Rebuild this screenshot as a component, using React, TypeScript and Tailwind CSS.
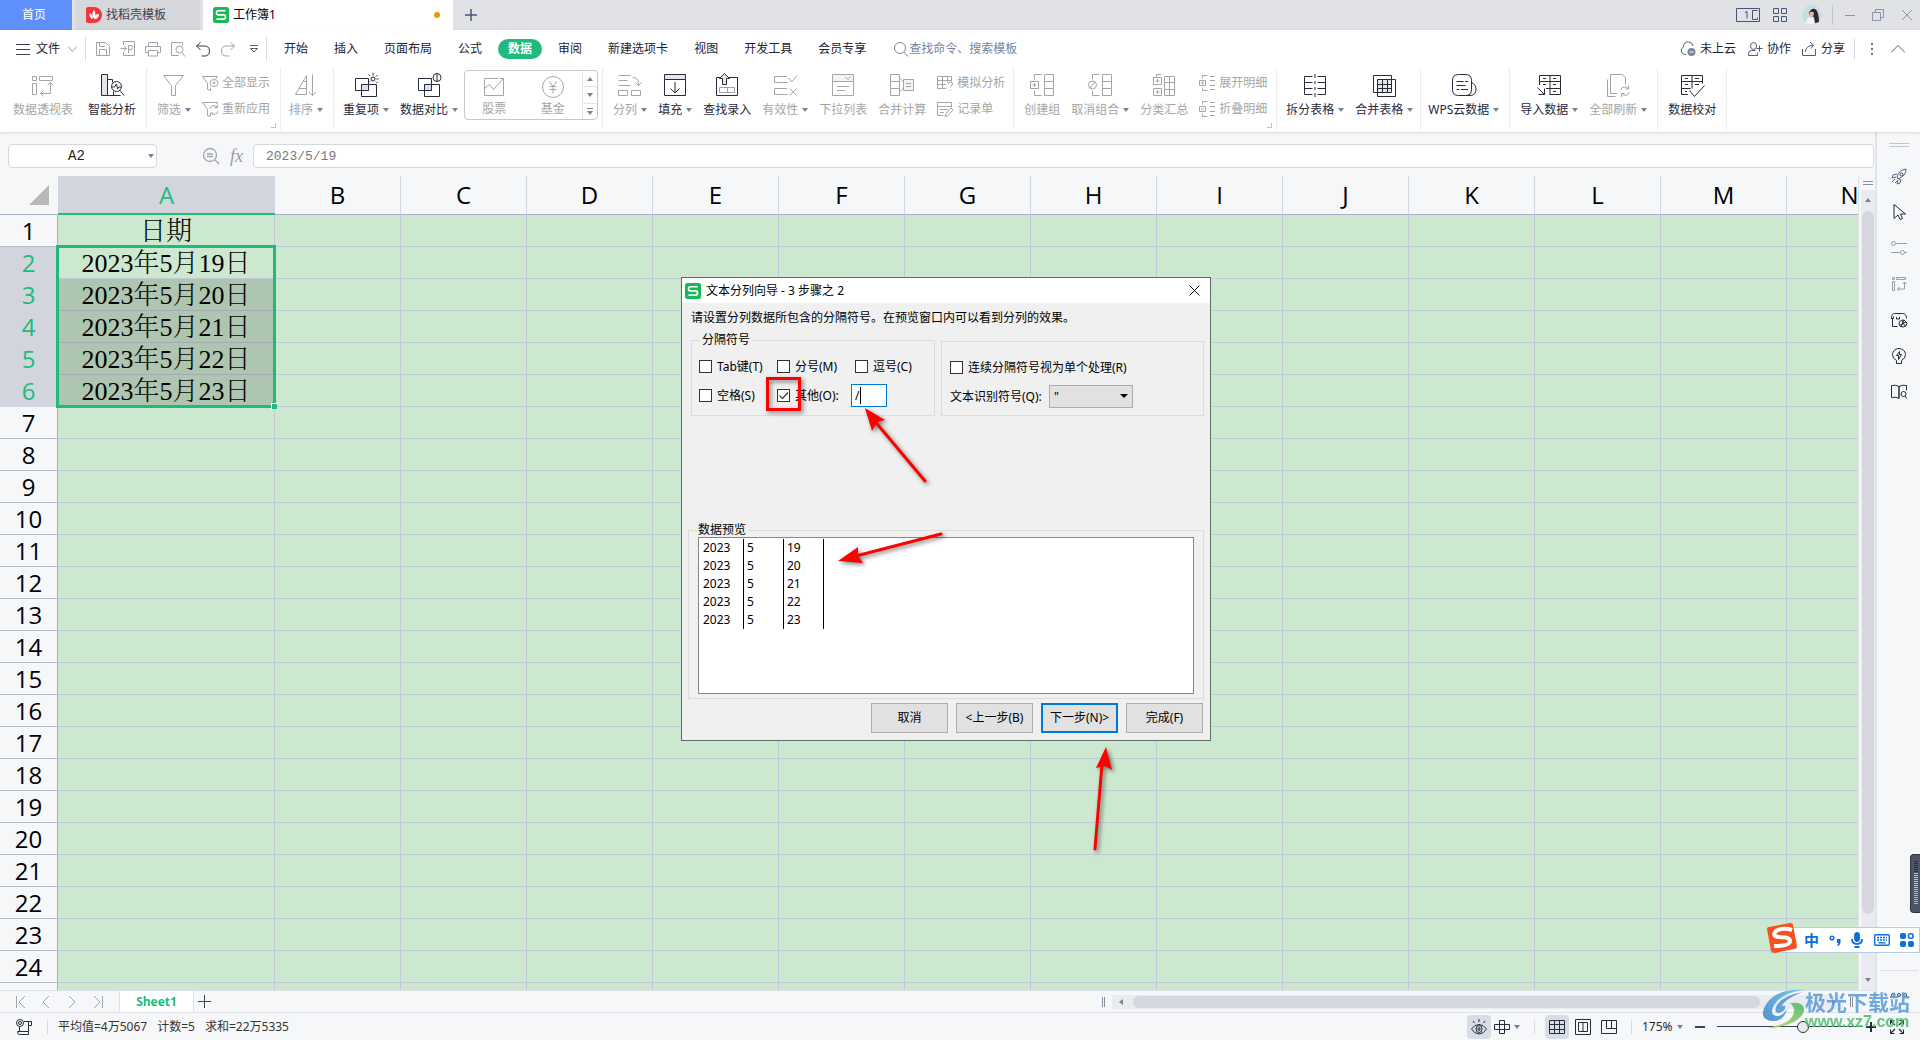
import React from "react";
import clsx from "clsx";

type IconName = keyof typeof glyphs;

// 24x24 line drawings used by the ribbon
const glyphs = {
  pivot: (
    <>
      <path d="M1.500 3.500h4v4h-4zM8.500 3.500h13v4h-13zM1.500 10.500h4v11h-4z" />
      <path d="M19.500 9.500v11h-10M16.500 12.500l3-3 3 3M12.500 17.500l-3 3 3 3" />
    </>
  ),
  analyze: (
    <>
      <path d="M1.500 1.500h6v21h-6z" fill="#e4e6ec" />
      <path d="M7.500 6.500h5v3M7.500 22.500h13M13.500 22.500v-4" />
      <circle cx="16.500" cy="13.500" r="5" />
      <path d="M11.500 14h3l2-3 1 5 1.500-2h2M20 17.500l4 5" />
    </>
  ),
  filter: <path d="M1.500 2.500h20l-8 10v10h-4v-10z" />,
  sort: <path d="M12.500 2.500v19h-11l11-19M9 8.500h3.500M5 15.500h7.500M18.500 1.500v21M15 19l3.500 3.500 3.500-3.500" />,
  duplicate: (
    <>
      <path d="M1.500 5.500h13v12h-13zM7.500 11.500h15v12h-15z" />
      <path d="M7.500 11.500h7v6h-7z" fill="#dcdfe6" />
      <circle cx="19" cy="6" r="2" />
      <path d="M19 0v2.500M14.500 1.500l1.500 1.500M22 8.500l1.500 1.500M15 9.500l1-1M22 3.500L23.500 2M22.500 6h2" />
    </>
  ),
  compare: (
    <>
      <path d="M1.500 5.500h13v12h-13zM7.500 11.500h15v12h-15z" />
      <path d="M7.500 11.500h7v6h-7z" fill="#dcdfe6" />
      <circle cx="20" cy="4.500" r="4" fill="#fff" />
      <path d="M20 .5v8" />
    </>
  ),
  stock: <path d="M16 4.500H2.500v17h19v-13M2.500 14.500l5-4 4 5 10-11M17.500 4.500h4v4" />,
  fund: (
    <>
      <circle cx="12" cy="13" r="10.500" />
      <path d="M8.500 7.500l3.500 5 3.500-5M12 12.500v7M8.500 12.500h7M8.500 15.500h7" />
    </>
  ),
  split: (
    <path d="M.5 2.500h12M.5 7.500h9M.5 12.500h12M.5 17.500h9v5h-9zM13.500 17.500h9v5h-9zM14.500 4.500q6 0 6 6v2M17.500 9.500l3 3 3-3" />
  ),
  fill: (
    <>
      <path d="M1.500 1.500h21v5h-21z" fill="#e4e6ec" />
      <path d="M1.500 6.500v16h21v-16M12 9v11M7.500 15.500l4.500 4.500 4.500-4.500" />
    </>
  ),
  lookup: (
    <>
      <path d="M6 4.500H1.500v18h21v-18H14" />
      <path d="M4.500 14.500h15v5h-15zM12.500 14.500v5" stroke="#9da1ad" />
      <path d="M7.500 11.500v-6h-3l5-5 5 5h-3v6z" fill="#e4e6ec" />
    </>
  ),
  validity: <path d="M14 3.500H1.500v6h13M14 15.500H1.500v6h13M15.500 5l3 4 5.500-6.500M17 15.500l6.500 7M23.500 15.500l-6.500 7" />,
  dropdown: (
    <>
      <path d="M1.500 1.500h21v7h-21z" fill="#f3f3f3" />
      <path d="M1.500 8.500v14h21v-14M14.500 4l2.500 2.500 2.500-2.500M6 13.500h12M6 17.500h8" />
    </>
  ),
  consolidate: (
    <>
      <path d="M.5 1.500h9v21h-9zM.5 8.500h9M.5 15.500h9" />
      <path d="M13.500 6.500h10v11h-10z" fill="#f3f3f3" />
      <path d="M9.500 5l4 4M9.500 19l4-4M16 10.500h5M16 13.500h5" />
    </>
  ),
  group: (
    <>
      <path d="M14.500 1.500h9v21h-9zM14.500 8.500h9M14.500 15.500h9M11.500 1.500h-7v5M11.500 22.500h-7v-5" />
      <path d="M.5 8.500h8v7h-8zM2.500 12h4M4.500 10v4" />
    </>
  ),
  ungroup: (
    <>
      <path d="M14.500 1.500h9v21h-9zM14.500 8.500h9M14.500 15.500h9M11.500 1.500h-7v5M11.500 22.500h-7v-5" />
      <circle cx="4.500" cy="12" r="4" />
      <path d="M2 15l5-6" />
    </>
  ),
  subtotal: (
    <path d="M12.500 3.500h10v19h-10zM17.500 3.500v19M12.500 9.500h10M12.500 16.500h10M9.500 1.500h-5v3M1.500 4.500h8v7h-8zM1.500 15.500h8v7h-8zM3.500 8h4M5.500 6v4M3.500 19h4M5.500 17v4" />
  ),
  splitTable: (
    <path d="M9.500 3.500h-8v18h8M1.500 9.500h8M1.500 15.500h8M14.500 3.500h8v18h-8M22.500 9.500h-8M22.500 15.500h-8M12 1v4M12 8v3M12 14v3M12 20v4" />
  ),
  mergeTable: (
    <>
      <path d="M19.500 6.500v-4h-18v17h4M5.500 6.500h18v17h-18z" />
      <path d="M5.500 6.500h14v13h-14z" fill="#e4e6ec" />
      <path d="M5.500 11.500h14M5.500 15.500h14M10.500 6.500v13M15.500 6.500v13" />
    </>
  ),
  cloud: (
    <>
      <path d="M6.500 1.500h7q6 0 6 6v9q0 6-6 6h-7q-6 0-6-6v-9q0-6 6-6z" />
      <path d="M4.500 8.500h7M13 8.500h3M4.500 12.500h9M4.500 16.500h3M9 16.500h7M19.500 9.500q4.500 2 4.500 6.500 0 6.500-6 6.500h-4" />
    </>
  ),
  importData: <path d="M2.500 12v-9.500h21v19h-11M13 2.500v19M2.500 8.500h21M9 15.500h14.500M6 5.500h3M16 5.500h3M6 11.500h3M16 11.500h3M16 18.500h3M.5 14.500l7 7M7.500 15.500v6h-6" />,
  refresh: (
    <>
      <path d="M11 20.500H4.500v-19h12l3 3v7M1.500 6.500v17h8" />
      <path d="M14.500 17a4.500 4.500 0 0 1 8-1M23.500 19a4.500 4.500 0 0 1-8 1.500M22.500 12.500v3.500h-3M15.500 24v-3.500h3" />
    </>
  ),
  verify: <path d="M8 21.500H1.500v-19h21v8M12 2.500v13M1.500 8.500h21M1.500 15.500h9M5 5.500h3M15 5.500h4M5 11.500h3M15 11.500h4M5 18.500h2M9.500 17.500l5 6 10-11" />,
};

// 16x16 drawings
const smallGlyphs = {
  showAll: <path d="M.5 1.500h15l-2 2.500M.5 1.500l5 7v6l3 1v-3M8 8a4 3.500 0 0 1 8 0 4 3.500 0 0 1-8 0M11 8a1 1 0 0 1 2 0 1 1 0 0 1-2 0" />,
  reapply: <path d="M.5 1.500h15l-1 1.500M.5 1.500l5 7v6l3 1M8 8a4 4 0 0 1 7-2M16 10a4 4 0 0 1-7 2M15.500 3.500v3h-3M8.500 15v-3h3" />,
  whatIf: <path d="M9 13.500H.5v-12h14v5M.5 5.500h14M.5 9.500h9M5.500 1.500v12M10.500 1.500v6M11.500 9q0-2 2-2t2 2q0 1-2 2.500v1M13.500 15v1" />,
  form: <path d="M6 14.500H.5v-13h14v5M.5 5.500h14M3 8.500h8M3 11.500h4M8 15.500l1-3 5-5.500 2 2-5 5.500z" />,
  expand: <path d="M.5 5.500h6v5h-6zM2 8h3M3.500 6.500v3M3.500 3.500v-3h5M3.500 12.500v3h5M11 1.500h5M11 5.500h5M11 10.500h5M11 14.500h5" />,
  collapse: <path d="M.5 5.500h6v5h-6zM2 8h3M3.500 3.500v-3h5M3.500 12.500v3h5M11 1.500h5M11 5.500h5M11 10.500h5M11 14.500h5" />,
  save: <path d="M1.500 1.500h9l4 4v9h-13zM4.500 1.500v4h5M4.500 14.500v-6h7v6" />,
  output: <path d="M3.500 4V.5h11v14h-11V11M.5 7.500h6M4 5l2.500 2.500L4 10M8.500 12V4.500h2.500q1.500 0 1.500 2t-1.500 2h-2.500" />,
  print: <path d="M3.500 5V1.500h9V5M3.500 11.500h-3v-6h15v6h-3M3.500 9.500h9v5.500h-9z" />,
  preview: <path d="M9 14.500H1.500v-13h11v3M6 8.500a3.500 3.500 0 1 1 7 0 3.500 3.500 0 1 1-7 0M12 11.500l3 4" />,
  undo: <path d="M5.500 1.500l-4 3.500 4 4M1.500 5h8q5 0 5 5t-5 5h-3" />,
  redo: <path d="M10.500 1.500l4 3.500-4 4M14.500 5h-8q-5 0-5 5t5 5h3" />,
  cloudOff: (
    <>
      <path d="M6 13.500H4.500a4 4 0 0 1-1-7.500q0-5 5-5 4 0 4.500 4" />
      <circle cx="11.500" cy="11" r="4" fill="#7d869f" stroke="none" />
      <path d="M9.500 11h4" stroke="#fff" />
    </>
  ),
  person: <path d="M3.500 5a3 3.500 0 1 1 6 0 3 3.500 0 1 1-6 0M1.500 14.500v-2q0-3 3-3h4M1.500 14.500h9v-3M12.500 4.500v6M9.500 7.500h6" />,
  share: <path d="M1.500 8v6.500h13V8M4.500 11q0-6 8-7M9 1l3.500 3L10 7.500" />,
  search: <path d="M1.500 7a5.500 5.500 0 1 1 11 0 5.500 5.500 0 1 1-11 0M11 11l4 4.500" />,
};

function Glyph({ name, className }: { name: IconName; className?: string }) {
  return (
    <svg viewBox="0 0 24 24" fill="none" stroke="currentColor" className={clsx("w-6 h-6 shrink-0 overflow-visible", className)}>
      {glyphs[name]}
    </svg>
  );
}

function SmallGlyph({ name, className }: { name: keyof typeof smallGlyphs; className?: string }) {
  return (
    <svg viewBox="0 0 16 16" fill="none" stroke="currentColor" className={clsx("w-4 h-4 shrink-0 overflow-visible", className)}>
      {smallGlyphs[name]}
    </svg>
  );
}

function Caret({ className }: { className?: string }) {
  return (
    <svg viewBox="0 0 6 4" className={clsx("w-1.5 h-1 shrink-0", className)} fill="#7a8194">
      <path d="M0 0h6L3 4z" />
    </svg>
  );
}

function WpsLogo() {
  return (
    <svg viewBox="0 0 16 16" className="w-4 h-4 shrink-0">
      <rect width="16" height="16" rx="2.500" fill="#19b955" />
      <path d="M12.500 3.700H5.500q-2 0-2 2.100t2 2.100h5q2 0 2 2.100t-2 2.100h-7" fill="none" stroke="#fff" strokeWidth="1.600" />
    </svg>
  );
}

interface ToolProps {
  icon: IconName;
  label: string;
  caret?: boolean;
  off?: boolean;
}

function Tool({ icon, label, caret, off }: ToolProps) {
  return (
    <button className={clsx("flex flex-col items-center gap-[5px] pt-[5px] shrink-0 whitespace-nowrap", off ? "text-[#a5a5a5]" : "text-[#262b3d]")}>
      <Glyph name={icon} />
      <span className="flex items-center leading-4">
        {label}
        {caret && <Caret className="ml-1" />}
      </span>
    </button>
  );
}

function ToolPair({ items }: { items: { icon: keyof typeof smallGlyphs; label: string }[] }) {
  return (
    <div className="flex flex-col gap-2.5 pt-[7px] shrink-0 text-[#a5a5a5]">
      {items.map((item) => (
        <button key={item.label} className="flex items-center gap-1 leading-4 whitespace-nowrap">
          <SmallGlyph name={item.icon} />
          {item.label}
        </button>
      ))}
    </div>
  );
}

function Group({ children, className = "gap-[11px] px-2.5", corner }: { children: React.ReactNode; className?: string; corner?: boolean }) {
  return (
    <div className={clsx("relative flex items-start border-r border-[#ececef] h-[62px] shrink-0", className)}>
      {children}
      {corner && <span className="absolute right-1 bottom-0.5 w-[5px] h-[5px] border-r border-b border-[#b9bfcc]" />}
    </div>
  );
}

function TitleBar() {
  return (
    <header className="flex h-[30px] bg-[#e1e2e6] text-[#3d4152]">
      <button className="w-[72px] pr-1 bg-[#5f8ffb] text-white">首页</button>
      <button className="flex items-center gap-1 w-[125px] ml-[3px] pl-[11px] bg-[#d6d7db]">
        <svg viewBox="0 0 16 16" className="w-4 h-4">
          <path d="M2 0h6a8 8 0 0 1 0 16H2a2 2 0 0 1-2-2V2a2 2 0 0 1 2-2z" fill="#f4333c" />
          <path d="M7 12Q2 10 4 6q3 2 3 6M7.500 11Q5 6 8 3q3 4-.5 8M8 12q0-5 5-5 0 5-5 5" fill="#fff" />
        </svg>
        找稻壳模板
      </button>
      <button className="flex items-center gap-1 w-[250px] ml-[3px] px-2.5 bg-white text-black">
        <WpsLogo />
        工作簿1
        <span className="w-1.5 h-1.5 rounded-full bg-[#e69a0c] ml-auto mr-[3px]" />
      </button>
      <button aria-label="新建" className="px-3">
        <svg viewBox="0 0 12 12" className="w-3 h-3" stroke="#4a5478" strokeWidth="1.500">
          <path d="M6 0v12M0 6h12" />
        </svg>
      </button>
      <div className="ml-auto flex items-center pr-[7px] text-[#4a5478]">
        <svg viewBox="0 0 24 14" className="w-6 h-3.5" fill="none" stroke="currentColor">
          <path d="M.5.5h23v13H.5zM16.500 2.500h5M16.500 2.500v9h5v-2M9 4.500l2-1v7" />
        </svg>
        <svg viewBox="0 0 14 14" className="w-3.5 h-3.5 ml-[13px]" fill="none" stroke="currentColor">
          <path d="M.5.5h5v5h-5zM8.500.5h5v5h-5zM.5 8.500h5v5h-5zM8.500 8.500h5v5h-5z" />
        </svg>
        <svg viewBox="0 0 20 20" className="w-5 h-5 ml-[15px]">
          <circle cx="10" cy="10" r="10" fill="#c9dce2" />
          <path d="M7 8q2-5 6-4 4 2 4 13l-4 1-1-6-4-1z" fill="#33252b" />
          <path d="M8 7q3-1 4 1l-1 4-4-1z" fill="#e6b9ac" />
          <path d="M4 18q1-6 5-6l3 2 0 5q-4 1-8-1z" fill="#eef4f7" />
        </svg>
        <span className="w-px h-5 bg-[#c3c6ce] ml-2.5" />
        <svg viewBox="0 0 68 12" className="w-[68px] h-3 ml-3" fill="none" stroke="#8b93aa">
          <path d="M0 6.500h10M27.500 3.500h8v8h-8zM30.500 3.500v-3h8v8h-3M57 1l10 10M67 1L57 11" />
        </svg>
      </div>
    </header>
  );
}

const tabs = ["开始", "插入", "页面布局", "公式", "数据", "审阅", "新建选项卡", "视图", "开发工具", "会员专享"];

function MenuBar() {
  return (
    <nav className="flex items-center h-[38px] pl-4 pr-[15px] text-[#1e2233] whitespace-nowrap">
      <button className="flex items-center">
        <svg viewBox="0 0 14 11" className="w-3.5 h-[11px] mr-1.5" stroke="#3b4052">
          <path d="M0 .5h14M0 5.500h14M0 10.500h14" />
        </svg>
        文件
        <svg viewBox="0 0 9 6" className="w-[9px] h-1.5 ml-2" fill="none" stroke="#9a9fac">
          <path d="M0 .5l4.500 5 4.500-5" />
        </svg>
      </button>
      <span className="w-px h-6 bg-[#dcdee4] ml-2 mr-[9px]" />
      <div className="flex items-center gap-[9px] text-[#a0a3ab]">
        <SmallGlyph name="save" />
        <SmallGlyph name="output" />
        <SmallGlyph name="print" />
        <SmallGlyph name="preview" />
        <SmallGlyph name="undo" className="text-[#333747]" />
        <SmallGlyph name="redo" />
        <svg viewBox="0 0 8 8" className="w-2 h-2 ml-[5px]" fill="none" stroke="#555a69">
          <path d="M0 .5h8M.5 3.500L4 7l3.500-3.500z" />
        </svg>
      </div>
      <span className="w-px h-6 bg-[#dcdee4] ml-2 mr-[7px]" />
      <div className="flex items-center gap-1.5">
        {tabs.map((tab) => (
          <button key={tab} className={clsx("h-5 px-2.5 rounded-full", tab === "数据" && "bg-[#20bb7c] text-white font-bold")}>
            {tab}
          </button>
        ))}
      </div>
      <label className="flex items-center ml-[17px] flex-1 text-[#7783a0]">
        <SmallGlyph name="search" />
        <input aria-label="搜索" placeholder="查找命令、搜索模板" className="w-40 outline-none placeholder:text-[#7783a0]" />
      </label>
      <div className="flex items-center">
        <button className="flex items-center gap-1">
          <SmallGlyph name="cloudOff" className="text-[#555c72]" />
          未上云
        </button>
        <button className="flex items-center gap-1 ml-[11px]">
          <SmallGlyph name="person" className="text-[#555c72]" />
          协作
        </button>
        <button className="flex items-center gap-1 ml-[10px]">
          <SmallGlyph name="share" className="text-[#555c72]" />
          分享
        </button>
        <span className="w-px h-5 bg-[#d4d7de] ml-[9px]" />
        <svg viewBox="0 0 2 12" className="w-0.5 h-3 ml-4" fill="#6d7386">
          <path d="M0 0h2v2H0zM0 5h2v2H0zM0 10h2v2H0z" />
        </svg>
        <svg viewBox="0 0 14 8" className="w-3.5 h-2 ml-[18px]" fill="none" stroke="#555c72">
          <path d="M0 7.500l7-7 7 7" />
        </svg>
      </div>
    </nav>
  );
}

function Ribbon() {
  return (
    <div className="flex h-16 overflow-hidden">
      <Group className="gap-[15px] pl-[13px] pr-2.5">
        <Tool icon="pivot" label="数据透视表" off />
        <Tool icon="analyze" label="智能分析" />
      </Group>
      <Group corner>
        <Tool icon="filter" label="筛选" caret off />
        <ToolPair items={[{ icon: "showAll", label: "全部显示" }, { icon: "reapply", label: "重新应用" }]} />
      </Group>
      <Group className="pl-2 pr-2.5">
        <Tool icon="sort" label="排序" caret off />
      </Group>
      <Group className="gap-[11px] pl-[9px] pr-1">
        <Tool icon="duplicate" label="重复项" caret />
        <Tool icon="compare" label="数据对比" caret />
        <div className="flex -ml-[5px] mt-0.5 h-[50px] w-[134px] border border-[#c6c8ce] rounded-sm text-[#a5a5a5]">
          <div className="flex flex-1 justify-around">
            <button className="flex flex-col items-center gap-[3px] pt-[3px] leading-4">
              <Glyph name="stock" />
              股票
            </button>
            <button className="flex flex-col items-center gap-[3px] pt-[3px] leading-4">
              <Glyph name="fund" />
              基金
            </button>
          </div>
          <div className="flex flex-col w-[15px] border-l border-[#e2e4e8]">
            <button aria-label="上一行" className="flex-1 flex items-center justify-center border-b border-[#e2e4e8]">
              <Caret className="rotate-180" />
            </button>
            <button aria-label="下一行" className="flex-1 flex items-center justify-center border-b border-[#e2e4e8]">
              <Caret />
            </button>
            <button aria-label="更多" className="flex-1 flex flex-col gap-0.5 items-center justify-center">
              <span className="w-1.5 h-px bg-[#7a8194]" />
              <Caret />
            </button>
          </div>
        </div>
      </Group>
      <Group className="gap-[11px] pl-2.5 pr-2">
        <Tool icon="split" label="分列" caret off />
        <Tool icon="fill" label="填充" caret />
        <Tool icon="lookup" label="查找录入" />
        <Tool icon="validity" label="有效性" caret off />
        <Tool icon="dropdown" label="下拉列表" off />
        <Tool icon="consolidate" label="合并计算" off />
        <ToolPair items={[{ icon: "whatIf", label: "模拟分析" }, { icon: "form", label: "记录单" }]} />
      </Group>
      <Group corner className="gap-[11px] pl-2.5 pr-[9px]">
        <Tool icon="group" label="创建组" off />
        <Tool icon="ungroup" label="取消组合" caret off />
        <Tool icon="subtotal" label="分类汇总" off />
        <ToolPair items={[{ icon: "expand", label: "展开明细" }, { icon: "collapse", label: "折叠明细" }]} />
      </Group>
      <Group className="gap-[11px] pl-[9px] pr-[7px]">
        <Tool icon="splitTable" label="拆分表格" caret />
        <Tool icon="mergeTable" label="合并表格" caret />
      </Group>
      <Group className="pl-[7px] pr-2.5">
        <Tool icon="cloud" label="WPS云数据" caret />
      </Group>
      <Group>
        <Tool icon="importData" label="导入数据" caret />
        <Tool icon="refresh" label="全部刷新" caret off />
      </Group>
      <Group>
        <Tool icon="verify" label="数据校对" />
      </Group>
    </div>
  );
}

function FormulaBar() {
  return (
    <div className="flex items-center h-11 pt-1 pl-2 pr-px">
      <div className="relative">
        <input aria-label="名称框" defaultValue="A2" className="w-[149px] h-6 pr-3 bg-white border border-[#d5d7dd] rounded-sm text-center text-sm text-[#222] font-['Liberation_Mono',monospace]" />
        <Caret className="absolute right-[3px] top-2.5" />
      </div>
      <svg viewBox="0 0 18 18" className="w-[18px] h-[18px] ml-[45px]" fill="none" stroke="#a3a6ae" strokeWidth="1.300">
        <circle cx="8" cy="8" r="6.500" />
        <path d="M5 7h6M5 9.500h6M13 13l4 4" />
      </svg>
      <span className="w-[33px] text-center text-lg leading-6 italic text-[#9a9da6] font-['Liberation_Serif',serif]">fx</span>
      <input aria-label="编辑栏" defaultValue="2023/5/19" className="flex-1 h-6 px-3 bg-white border border-[#d5d7dd] rounded-sm text-[13px] text-[#777] font-['Liberation_Mono',monospace]" />
    </div>
  );
}

const columns = ["A", "B", "C", "D", "E", "F", "G", "H", "I", "J", "K", "L", "M", "N"];
const lastLabelledRow = 24;
const columnA: Record<number, string> = {
  1: "日期",
  2: "2023年5月19日",
  3: "2023年5月20日",
  4: "2023年5月21日",
  5: "2023年5月22日",
  6: "2023年5月23日",
};

function Sheet() {
  const rows = Array.from({ length: lastLabelledRow + 1 }, (_, i) => i + 1);

  return (
    <div className="flex-1 min-w-0 overflow-hidden bg-[#cce8cf]">
      <table className="border-separate border-spacing-0 font-['Open_Sans','Noto_Sans',sans-serif] text-2xl text-black">
        <thead>
          <tr className="h-[39px]">
            <th className="w-[58px] min-w-[58px] p-0 bg-[#f6f7f9] border-b border-r border-b-[#a9afc6] border-r-[#f6f7f9]">
              <svg viewBox="0 0 20 20" className="w-5 h-5 ml-auto mr-2" fill="#b9b9b9">
                <path d="M20 0v20H0z" />
              </svg>
            </th>
            {columns.map((col) => (
              <th
                key={col}
                className={clsx(
                  "p-0 font-normal leading-8",
                  col === "A"
                    ? "w-[217px] min-w-[217px] bg-[#d2d5dd] text-[#20bb7c] border-b-2 border-[#20bb7c]"
                    : "w-[126px] min-w-[126px] bg-[#f6f7f9] border-b border-r border-b-[#a9afc6] border-r-[#d3d6e0]"
                )}
              >
                {col}
              </th>
            ))}
          </tr>
        </thead>
        <tbody>
          {rows.map((row) => {
            const selected = row > 1 && row < 7;
            return (
              <tr key={row} className="h-8">
                <th
                  className={clsx(
                    "p-0 font-normal leading-[31px] border-b border-r border-r-[#a9afc6]",
                    selected ? "bg-[#d2d5de] text-[#20bb7c] border-b-[#d2d8e4]" : "bg-[#f6f7f9] border-b-[#b4b9cc]"
                  )}
                >
                  {row <= lastLabelledRow && row}
                </th>
                {columns.map((col) => {
                  const inRange = col === "A" && selected;
                  return (
                    <td
                      key={col}
                      className={clsx(
                        "relative p-0 border-b border-r text-center whitespace-nowrap",
                        inRange && row > 2 ? "bg-[#aec5b0] border-[#a3a9bd]" : "border-[#c4c8dc]",
                        col === "A" && "pt-0.5 leading-[29px] text-[26px] font-light font-['Liberation_Serif','Noto_Serif_CJK_SC','Noto_Sans_CJK_SC',serif]"
                      )}
                    >
                      {col === "A" && columnA[row]}
                      {col === "A" && row === 2 && (
                        <div className="absolute z-10 -left-0.5 -right-0.5 -top-0.5 h-[163px] border-[3px] border-[#20bb7c]">
                          <span className="absolute -right-1 -bottom-1 w-1.5 h-1.5 bg-[#20bb7c] border-t border-l border-white" />
                        </div>
                      )}
                    </td>
                  );
                })}
              </tr>
            );
          })}
        </tbody>
      </table>
    </div>
  );
}

function VerticalScroll() {
  return (
    <div className="flex flex-col items-center w-[17px] shrink-0 pl-0.5 border-l border-[#dfe1e7]">
      <svg viewBox="0 0 10 4" className="w-2.5 h-1 mt-[5px] mb-[5px] shrink-0" stroke="#8790a8">
        <path d="M0 .5h10M0 3.500h10" />
      </svg>
      <div className="flex flex-col items-center flex-1 w-full bg-[#e9ebf0]">
        <Caret className="rotate-180 mt-2 mb-[9px]" />
        <div className="flex-1 w-3 rounded-full bg-[#d4d7de]" />
        <Caret className="mt-16 mb-2" />
      </div>
    </div>
  );
}

function SheetBar() {
  return (
    <div className="flex items-center h-[22px] border-t border-[#dfe1e7] text-[#3d4152]">
      <svg viewBox="0 0 88 12" className="w-[88px] h-3 ml-4" fill="none" stroke="#a0a4af">
        <path d="M.5 0v12M9 0L3 6l6 6M33 0l-6 6 6 6M53 0l6 6-6 6M78 0l6 6-6 6M86.500 0v12" />
      </svg>
      <button className="self-stretch w-[75px] ml-[15px] bg-white border-x border-[#dfe1e7] text-[#20bb7c] font-bold font-['Open_Sans','Noto_Sans',sans-serif]">Sheet1</button>
      <button aria-label="新建工作表" className="ml-1">
        <svg viewBox="0 0 13 13" className="w-[13px] h-[13px]" stroke="currentColor">
          <path d="M6.500 0v13M0 6.500h13" />
        </svg>
      </button>
      <div className="flex flex-1 justify-end items-center">
        <span className="w-[3px] h-2.5 border-x border-[#8790a8] mr-[7px]" />
        <div className="flex items-center w-[731px] h-3.5 bg-[#e9ebf0] px-1.5">
          <Caret className="rotate-90" />
          <div className="flex-1 h-3 rounded-full bg-[#d4d7de] ml-[9px] mr-[71px]" />
          <Caret className="-rotate-90" />
        </div>
        <span className="w-[3px] h-2.5 border-x border-[#8790a8] ml-[7px] mr-[22px]" />
      </div>
    </div>
  );
}

const sideIcons = [
  { name: "rocket", tone: "text-[#5a6480]", d: "M6 9Q8 2 15 1q0 7-8 10zM6 9l3 3M9 7a1.500 1.500 0 1 0 3-1 1.500 1.500 0 1 0-3 1M6 6L2 7l-1 3 4-1M10 11l-1 4-3 1 1-4M4 11l-3 3M6 13l-2 2" },
  { name: "cursor", tone: "text-[#262b3d]", d: "M3 .5v14l4-3.500 2 4.500 2.500-1-2-4.500h5z" },
  { name: "settings", tone: "text-[#959dae]", d: "M.5 3.500a2 2 0 1 0 4 0 2 2 0 1 0-4 0M5 3.500h11M0 12.500h9M9.500 12.500a2 2 0 1 0 4 0 2 2 0 1 0-4 0M14 12.500h2" },
  { name: "transpose", tone: "text-[#959dae]", d: "M1.500 1.500h2v2h-2zM5.500 1.500h9v2h-9zM1.500 5.500h2v9h-2zM13.500 6v7h-7M11.500 8l2-2 2 2M8.500 11l-2 2 2 2" },
  { name: "style", tone: "text-[#262b3d]", d: "M1.500 7v7.500h5M.5 6.500q0-5 3-5h8q4 0 4 5M.5 6.500h2v-2M5.500 5v2h3v-2M8 12q0-4 5-4l3 3q0 4-4 4t-4-3M9 13l6-3M11 9l3 5M13 8l-3 7" },
  { name: "idea", tone: "text-[#262b3d]", d: "M5.500 12.500q-4-2-4-6a6.500 6 0 0 1 13 0q0 4-4 6v3h-5zM8.500 3.500l-3 4h2v4l3-5h-2z" },
  { name: "book", tone: "text-[#262b3d]", d: "M8 2.500Q5 .5.5 1.500v12q5-1 7.500 1zV14M8 2.500q3-2 7.500-1v5M10 10a2.500 2.500 0 1 0 5 0 2.500 2.500 0 1 0-5 0M14 12l2 2.500" },
];

function Sidebar() {
  return (
    <aside className="flex flex-col items-center w-[45px] shrink-0 border-l-2 border-[#e1e3ea] pt-[11px] pb-[15px]">
      <span className="w-5 h-1 border-y border-[#c3c6ce] mb-[21px]" />
      <div className="flex flex-col gap-5">
        {sideIcons.map((icon) => (
          <button key={icon.name} aria-label={icon.name} className={icon.tone}>
            <svg viewBox="0 0 16 16" className="w-4 h-4 overflow-visible" fill="none" stroke="currentColor">
              <path d={icon.d} />
            </svg>
          </button>
        ))}
      </div>
      <span className="w-[38px] h-px bg-[#dfe1e7] mt-auto" />
      <svg viewBox="0 0 16 4" className="w-4 h-1 mt-[22px]" fill="none" stroke="#3b4052">
        <circle cx="2" cy="2" r="1.500" />
        <circle cx="8" cy="2" r="1.500" />
        <circle cx="14" cy="2" r="1.500" />
      </svg>
    </aside>
  );
}

function StatusBar() {
  return (
    <footer className="flex items-center h-7 border-t border-[#dfe1e7] text-[#262b3d] pl-4 pr-4">
      <svg viewBox="0 0 16 16" className="w-4 h-4" fill="none" stroke="currentColor">
        <circle cx="4" cy="4" r="3.500" />
        <circle cx="4" cy="4" r="1.500" />
        <path d="M8 2.500h7.500v4h-2.500M12.500 2.500v10M3.500 8v4M1.500 12.500h11v3h-9q-2 0-2-3z" />
      </svg>
      <span className="w-px h-3.5 bg-[#d9dbe1] ml-[15px] mr-2.5" />
      <div className="flex gap-2.5 text-[#333]">
        <span>平均值=4万5067</span>
        <span>计数=5</span>
        <span>求和=22万5335</span>
      </div>
      <div className="ml-auto flex items-center">
        <button aria-label="护眼模式" className="flex items-center justify-center w-6 h-6 rounded-sm bg-[#d8dde5]">
          <svg viewBox="0 0 16 16" className="w-4 h-4" fill="none" stroke="currentColor">
            <path d="M.5 10q3-4.500 7.500-4.500T15.500 10q-3 5-7.500 5T.5 10M8 0v3M2 2l1.500 2M14 2l-1.500 2" />
            <ellipse cx="8" cy="10" rx="3" ry="3.500" />
            <ellipse cx="8" cy="10" rx="1" ry="1.500" />
          </svg>
        </button>
        <button aria-label="阅读模式" className="flex items-center gap-1 ml-[3px]">
          <svg viewBox="0 0 16 16" className="w-4 h-4" fill="none" stroke="currentColor">
            <path d="M5.500 1.500h5v13h-5zM.5 5.500h15v5H.5z" />
          </svg>
          <Caret />
        </button>
        <span className="w-px h-3.5 bg-[#d9dbe1] ml-3.5 mr-2.5" />
        <button aria-label="普通视图" className="flex items-center justify-center w-6 h-6 rounded-sm bg-[#d8dde5]">
          <svg viewBox="0 0 16 14" className="w-4 h-3.5" fill="none" stroke="currentColor">
            <path d="M.5.5h15v13H.5zM.5 4.500h15M.5 9.500h15M5.500.5v13M10.500.5v13" />
          </svg>
        </button>
        <button aria-label="分页预览" className="ml-1.5">
          <svg viewBox="0 0 16 16" className="w-4 h-4" fill="none" stroke="currentColor">
            <path d="M.5.5h15v15H.5zM3.500 3.500h9v9h-9zM8 3.500v9" />
          </svg>
        </button>
        <button aria-label="页面布局" className="ml-2.5">
          <svg viewBox="0 0 16 14" className="w-4 h-3.5" fill="none" stroke="currentColor">
            <path d="M.5.5h15v13H.5zM5.500.5v8h10M10.500.5v8" />
          </svg>
        </button>
        <span className="w-px h-3.5 bg-[#d9dbe1] ml-3.5 mr-2.5" />
        <button className="flex items-center gap-1 w-[43px]">
          175%
          <Caret />
        </button>
        <button aria-label="缩小" className="ml-2.5 w-2.5 h-0.5 bg-[#3b435e]" />
        <input
          type="range"
          aria-label="缩放"
          defaultValue={60}
          className="appearance-none w-[146px] h-3 ml-3 bg-[linear-gradient(#3b435e,#3b435e)] bg-[length:100%_1px] bg-center bg-no-repeat [&::-webkit-slider-thumb]:appearance-none [&::-webkit-slider-thumb]:w-3 [&::-webkit-slider-thumb]:h-3 [&::-webkit-slider-thumb]:rounded-full [&::-webkit-slider-thumb]:bg-[#e9e9ea] [&::-webkit-slider-thumb]:border [&::-webkit-slider-thumb]:border-[#333]"
        />
        <button aria-label="放大" className="ml-[3px]">
          <svg viewBox="0 0 10 10" className="w-2.5 h-2.5" stroke="#262b3d" strokeWidth="2">
            <path d="M5 0v10M0 5h10" />
          </svg>
        </button>
        <button aria-label="全屏" className="ml-3.5">
          <svg viewBox="0 0 14 14" className="w-3.5 h-3.5" fill="none" stroke="currentColor" strokeWidth="1.200">
            <path d="M.5 4.500v-4h4M9.500.5h4v4M13.500 9.500v4h-4M4.500 13.500h-4v-4M1 1l4 4M13 1L9 5M13 13L9 9M1 13l4-4" />
          </svg>
        </button>
      </div>
    </footer>
  );
}

function Check({ label, checked, className }: { label: string; checked?: boolean; className?: string }) {
  return (
    <label className={clsx("flex items-center gap-[5px] whitespace-nowrap", className)}>
      <span className="relative w-[13px] h-[13px] shrink-0">
        <input type="checkbox" defaultChecked={checked} className="peer appearance-none block w-full h-full border border-[#333] bg-white" />
        <svg viewBox="0 0 13 13" className="hidden peer-checked:block absolute inset-0 pointer-events-none" fill="none" stroke="#444" strokeWidth="1.400">
          <path d="M2.500 6.500l3 3 5.500-6" />
        </svg>
      </span>
      {label}
    </label>
  );
}

const dialogButton = "w-[77px] h-[30px] bg-[#e1e1e1] whitespace-nowrap";
const previewDays = [19, 20, 21, 22, 23];

function SplitDialog() {
  return (
    <section role="dialog" aria-label="文本分列向导" className="absolute left-[681px] top-[277px] w-[530px] bg-[#f0f0f0] border border-[#5f6b66] text-black">
      <div className="flex items-center gap-[5px] h-[25px] pl-[3px] pr-2.5 bg-white">
        <WpsLogo />
        文本分列向导 - 3 步骤之 2
        <button aria-label="关闭" className="ml-auto">
          <svg viewBox="0 0 11 11" className="w-[11px] h-[11px]" stroke="#111">
            <path d="M.5.5l10 10M10.500.5l-10 10" />
          </svg>
        </button>
      </div>

      <p className="pt-[7px] pl-[9px] leading-4">请设置分列数据所包含的分隔符号。在预览窗口内可以看到分列的效果。</p>

      <div className="flex items-end gap-1.5 mt-[5px] pl-[9px] pr-1.5">
        <fieldset className="w-[244px] h-[85px] border border-[#dcdcdc] pl-[7px]">
          <legend className="ml-px px-0.5 leading-[18px]">分隔符号</legend>
          <div className="flex h-[29px] mt-[3px]">
            <Check label="Tab键(T)" className="w-[78px]" />
            <Check label="分号(M)" className="w-[78px]" />
            <Check label="逗号(C)" />
          </div>
          <div className="flex items-center h-[29px]">
            <Check label="空格(S)" className="w-[78px]" />
            <Check label="其他(O):" checked className="w-[74px]" />
            <span className="relative">
              <input aria-label="其他分隔符" defaultValue="/" className="block w-9 h-[23px] px-[3px] bg-white border border-[#0078d7]" />
              <span className="absolute left-[9px] top-[3px] w-px h-[17px] bg-black" />
            </span>
          </div>
        </fieldset>
        <fieldset className="flex-1 h-[75px] border border-[#dcdcdc] pl-2 pt-[11px]">
          <Check label="连续分隔符号视为单个处理(R)" className="h-[29px]" />
          <div className="flex items-center h-[29px]">
            <label htmlFor="qualifier" className="w-[99px] whitespace-nowrap">文本识别符号(Q):</label>
            <div className="relative">
              <select id="qualifier" className="appearance-none block w-[84px] h-[23px] px-1 bg-[#e1e1e1] border border-[#adadad]">
                <option>"</option>
              </select>
              <svg viewBox="0 0 8 4" className="absolute right-[5px] top-[9px] w-2 h-1 pointer-events-none">
                <path d="M0 0h8L4 4z" />
              </svg>
            </div>
          </div>
        </fieldset>
      </div>

      <fieldset className="mt-[107px] ml-1.5 mr-1.5 border border-[#dcdcdc] px-[9px] pb-1">
        <legend className="leading-[14px] pr-0.5">数据预览</legend>
        <div className="h-[157px] border border-[#828790] bg-white pt-px">
          <table className="border-separate border-spacing-0 leading-[18px]">
            <tbody>
              {previewDays.map((day) => (
                <tr key={day}>
                  <td className="w-[45px] p-0 pl-1 border-r border-black">2023</td>
                  <td className="w-10 p-0 pl-[3px] border-r border-black">5</td>
                  <td className="w-10 p-0 pl-[3px] border-r border-black">{day}</td>
                </tr>
              ))}
            </tbody>
          </table>
        </div>
      </fieldset>

      <div className="flex justify-end gap-2 mt-1 pr-[7px] pb-[7px]">
        <button className={clsx(dialogButton, "border border-[#adadad]")}>取消</button>
        <button className={clsx(dialogButton, "border border-[#adadad]")}>&lt;上一步(B)</button>
        <button className={clsx(dialogButton, "border-2 border-[#0078d7]")}>下一步(N)&gt;</button>
        <button className={clsx(dialogButton, "border border-[#adadad]")}>完成(F)</button>
      </div>
    </section>
  );
}

function Annotations() {
  return (
    <svg viewBox="0 0 480 500" className="absolute left-[760px] top-[370px] w-[480px] h-[500px] pointer-events-none drop-shadow-[2px_2px_2px_rgba(0,0,0,0.5)]" fill="#f00" stroke="#f00">
      <path d="M7.500 8.500h32v31h-32z" fill="none" strokeWidth="3" />
      <path d="M113 49l52 62M96 186l85-22M342 394l-7 85" fill="none" strokeWidth="3" strokeLinecap="round" />
      <path d="M105 38l20 12-8 2-5 9zM78 191l20-14 0 9 5 7zM346 377l6 23-7-4-9 2z" stroke="none" />
    </svg>
  );
}

function ImeBar() {
  return (
    <div className="absolute right-0 top-[927px] flex items-center w-[150px] h-[26px] pl-[33px] pr-[5px] bg-white border border-[#b7cbe8] text-[#0a6fd8]">
      <svg viewBox="0 0 32 32" className="absolute -left-[5px] -top-[5px] w-8 h-8">
        <path d="M1 6Q1 4 3 4L24 0q3 0 3 2l4 21q0 3-3 3L9 30q-3 0-4-2z" fill="#f4511e" />
        <path d="M26 7Q17 4 10 8q-5 5 3 6 11 0 11 4 0 5-16 5" fill="none" stroke="#fff" strokeWidth="4" />
      </svg>
      <div className="flex flex-1 items-center justify-between">
        <span className="text-[15px] leading-4 font-bold">中</span>
        <svg viewBox="0 0 12 12" className="w-3 h-3" fill="currentColor">
          <circle cx="3" cy="4" r="1.800" fill="none" stroke="currentColor" strokeWidth="1.500" />
          <path d="M8 5h3.500v3q0 3-3 4v-1.500l1-1.500H8z" />
        </svg>
        <svg viewBox="0 0 12 16" className="w-3 h-4" fill="none" stroke="currentColor" strokeWidth="1.800">
          <rect x="4" y="1" width="4" height="8" rx="2" fill="currentColor" />
          <path d="M1 7q0 5 5 5t5-5M6 12v1M3.500 15h5" />
        </svg>
        <svg viewBox="0 0 16 12" className="w-4 h-3" fill="none" stroke="currentColor" strokeWidth="1.400">
          <rect x=".7" y=".7" width="14.600" height="10.600" rx="1" />
          <path d="M3 3.500h10M3 6h10" strokeDasharray="2 1" />
          <path d="M4.500 8.800h7" />
        </svg>
        <svg viewBox="0 0 14 14" className="w-3.5 h-3.5" fill="currentColor">
          <rect width="6" height="6" rx="2" />
          <rect x="8.500" y=".8" width="4.500" height="4.500" rx="1.500" fill="none" stroke="currentColor" strokeWidth="1.600" />
          <rect y="8" width="6" height="6" rx="2" />
          <rect x="8" y="8" width="6" height="6" rx="2" />
        </svg>
      </div>
    </div>
  );
}

const levels = Array.from({ length: 22 }, (_, i) => i);

function LevelMeter() {
  return (
    <div className="absolute right-0 top-[854px] w-2.5 h-[59px] rounded-l bg-[#4e5566] border border-r-0 border-[#2f3442]">
      <svg viewBox="0 0 4 46" className="absolute left-[3px] top-1.5 w-1 h-[46px]">
        {levels.map((i) => (
          <rect key={i} y={i * 2} width="4" height="1" fill={i < 6 ? "#2b2f3a" : i < 9 ? "#e8c154" : i < 15 ? "#bfd96c" : "#6fd9a8"} />
        ))}
      </svg>
    </div>
  );
}

function SiteMark() {
  return (
    <div className="absolute right-[10px] bottom-[9px] flex items-center pointer-events-none opacity-85">
      <svg viewBox="0 0 44 42" className="w-11 h-[42px]">
        <defs>
          <linearGradient id="swirlBlue" x1="0" y1="1" x2="1" y2="0">
            <stop offset="0" stopColor="#3a7fc6" />
            <stop offset="1" stopColor="#5fc4ef" />
          </linearGradient>
          <linearGradient id="swirlGreen" x1="0" y1="1" x2="1" y2="0">
            <stop offset="0" stopColor="#c9d64b" />
            <stop offset="1" stopColor="#3fb56c" />
          </linearGradient>
        </defs>
        <path d="M43 1Q16-1 5 14q-10 15 4 18 13 1 16-12-5 8-11 7-7-2-2-11Q20 3 43 1z" fill="url(#swirlBlue)" />
        <path d="M41 3Q22 6 15 16q-4 8 2 8 7-2 6-7-3-1-5 2Q23 9 41 3z" fill="#4a93d2" />
        <path d="M28 14q15-2 14 8Q36 38 4 39q20-3 26-11 5-8-2-14z" fill="url(#swirlGreen)" />
      </svg>
      <div className="flex flex-col items-start -ml-px">
        <span className="text-[21px] leading-6 font-bold text-[#5a9bd8]">极光下载站</span>
        <span className="text-base leading-4 text-[#4dbb6d] font-['Liberation_Sans',sans-serif] font-bold">www.xz7.com</span>
      </div>
    </div>
  );
}

export default function App() {
  return (
    <div className="relative flex flex-col h-screen overflow-hidden bg-[#f6f7f9] text-xs font-['Noto_Sans','Noto_Sans_CJK_SC',sans-serif]">
      <TitleBar />
      <div className="relative z-10 bg-white shadow-sm">
        <MenuBar />
        <Ribbon />
      </div>

      <div className="flex flex-1 min-h-0">
        <main className="flex flex-col flex-1 min-w-0">
          <FormulaBar />
          <div className="flex flex-1 min-h-0">
            <Sheet />
            <VerticalScroll />
          </div>
          <SheetBar />
        </main>
        <Sidebar />
      </div>
      <StatusBar />

      <SplitDialog />
      <Annotations />
      <LevelMeter />
      <ImeBar />
      <SiteMark />
    </div>
  );
}
